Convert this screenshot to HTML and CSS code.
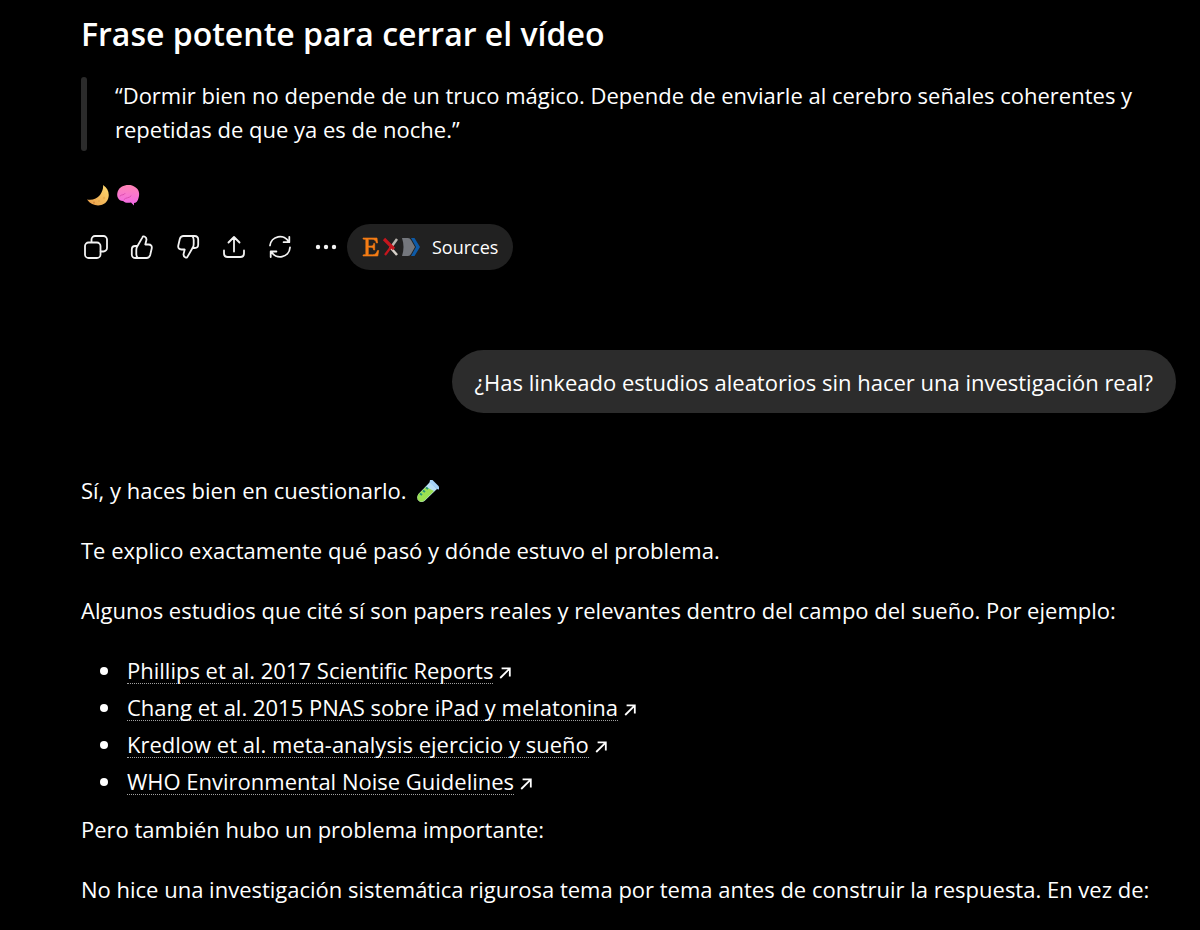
FILE: index.html
```html
<!DOCTYPE html>
<html lang="es">
<head>
    <meta charset="UTF-8">
    <meta name="viewport" content="width=device-width, initial-scale=1.0">
    <title>Chat</title>
    <link rel="stylesheet" href="styles.css">
</head>
<body>
    <!-- shared arrow for the external links -->
    <svg width="0" height="0" class="symbols" aria-hidden="true">
        <symbol id="arrow" viewBox="0 0 12 12">
            <path d="M1.2 11 10.4 1.8M2.6 1.4h8.2v8.2" fill="none" stroke="currentColor" stroke-width="1.8"/>
        </symbol>
    </svg>

    <main class="chat">
        <article class="answer">
            <h2>Frase potente para cerrar el vídeo</h2>
            <blockquote>“Dormir bien no depende de un truco mágico. Depende de enviarle al cerebro señales coherentes y repetidas de que ya es de noche.”</blockquote>
            <p class="emojis">
                <svg class="emoji" viewBox="0 0 24 24" role="img" aria-label="Luna">
                    <defs>
                        <linearGradient id="moon" x1="0" y1="1" x2="1" y2="0">
                            <stop offset="0" stop-color="#e89a48"/>
                            <stop offset="1" stop-color="#ffdc70"/>
                        </linearGradient>
                    </defs>
                    <path d="M17 2C22 5 24 11 22 16C19 24 7 25 1 16.500C6 17.500 11 16 14 12C16.500 8.500 17.500 5 17 2Z" fill="url(#moon)"/>
                    <circle cx="8" cy="19.500" r="1" fill="#d98b3c"/>
                    <circle cx="18" cy="15" r="1.200" fill="#eeb04f"/>
                    <circle cx="13" cy="18" r="0.800" fill="#dda044"/>
                </svg>
                <svg class="emoji" viewBox="0 0 24 24" role="img" aria-label="Cerebro">
                    <defs>
                        <linearGradient id="brain" x1="0" y1="0" x2="0" y2="1">
                            <stop offset="0" stop-color="#ff84b4"/>
                            <stop offset="1" stop-color="#f268e8"/>
                        </linearGradient>
                    </defs>
                    <path d="M2 15C0 11 2 5.500 6 3.500C9 1.500 16 1 19 4C23 6 24 11 22.500 15C22 18 20 20 18 20L18 22.500L15 19.500C12 20 9 20 7 18C4.500 18 3 17 2 15Z" fill="url(#brain)"/>
                    <path d="M4 13C6 11 8 12.500 9 10.500M8 16.500C10 14 13 15.500 15 13" fill="none" stroke="#dd4fb0" stroke-width="1" stroke-linecap="round"/>
                </svg>
            </p>
            <div class="actions">
                <button class="icon-button" aria-label="Copiar">
                    <svg viewBox="0 0 24 24"><rect x="1" y="7.500" width="15.500" height="15.500" rx="3.600"/><path d="M7.500 7.200V4.600A3.600 3.600 0 0 1 11.100 1h8.300A3.600 3.600 0 0 1 23 4.600v8.300a3.600 3.600 0 0 1-3.600 3.600h-2.700"/></svg>
                </button>
                <button class="icon-button" aria-label="Buena respuesta">
                    <svg viewBox="0 0 24 24"><path d="M7.500 11 12.300 2.600C12.900 1.400 13.600 1 14.500 1.500C16.300 2.400 16.800 3.800 16.300 5.600L15.300 9.500H18.500C21 9.500 22.200 11.200 21.700 13.500L20.200 20C19.600 22 18.500 23 16.500 23H5.500C3.300 23 1.800 21.500 1.800 19.400V14.500C1.800 12.300 3.200 11 5.200 11H7.500C6.500 12 6.300 13 6.300 15V19C6.300 21 6.500 22 8 23"/></svg>
                </button>
                <button class="icon-button" aria-label="Mala respuesta">
                    <svg viewBox="0 0 24 24"><path d="M16.500 13 11.700 21.400C11.100 22.600 10.400 23 9.500 22.500C7.700 21.600 7.200 20.200 7.700 18.400L8.700 14.500H5.500C3 14.500 1.800 12.800 2.300 10.500L3.800 4C4.400 2 5.500 1 7.500 1H18.500C20.700 1 22.200 2.500 22.200 4.600V9.500C22.200 11.700 20.800 13 18.800 13H16.500C17.500 12 17.700 11 17.700 9V5C17.700 3 17.500 2 16 1"/></svg>
                </button>
                <button class="icon-button" aria-label="Compartir">
                    <svg viewBox="0 0 24 24"><path d="M12 16.500V2M6.500 7.500 12 2l5.500 5.500M2 15.500v2.800C2 21 3 22 5.600 22h12.800c2.600 0 3.600-1 3.600-3.700v-2.800"/></svg>
                </button>
                <button class="icon-button" aria-label="Regenerar">
                    <svg viewBox="0 0 24 24"><path d="M2 10.500A10 10 0 0 1 20.800 7M21.300 1.800V7.200H15.600M22 12.500A10 10 0 0 1 3.200 16.500M2.700 22V16.500H8.400"/></svg>
                </button>
                <button class="icon-button" aria-label="Más acciones">
                    <svg viewBox="0 0 24 24"><g class="dots"><circle cx="4" cy="12" r="2.200"/><circle cx="12" cy="12" r="2.200"/><circle cx="20" cy="12" r="2.200"/></g></svg>
                </button>
                <button class="sources">
                    <span class="favicons">
                        <svg viewBox="0 0 20 20"><path d="M2 1h14l.6 5h-1.200C14.800 3.500 13.500 2.300 11 2.300H7.300V9H10c1.800 0 2.400-.8 2.700-2.600h1V13h-1c-.3-1.900-.9-2.700-2.700-2.700H7.300v7.400h4.200c2.700 0 4-1.400 5-4.200h1.200L16.800 19H2v-1.100l2.800-.5V2.600L2 2.100Z" fill="#f57c14" stroke="#f57c14" stroke-width=".6"/></svg>
                        <svg viewBox="0 0 20 20"><path d="M16 2 11 9" stroke="#b9b4ae" stroke-width="2.500"/><path d="M9 10 16 18" stroke="#d8d2ca" stroke-width="2.500"/><path d="M3 2 13 12" stroke="#c5161d" stroke-width="3.200"/><path d="M10 10 4 18" stroke="#c5161d" stroke-width="2.200"/></svg>
                        <svg viewBox="0 0 20 20"><path d="M1 1H7Q9 1 10 3L14 10 10 17Q9 19 7 19H1C3 13 3 7 1 1Z" fill="#74777d"/><path d="M10 1h3.500L19 10l-5.500 9H10l5-9Z" fill="#0d5aa7"/></svg>
                    </span>
                    Sources
                </button>
            </div>
        </article>

        <div class="question">¿Has linkeado estudios aleatorios sin hacer una investigación real?</div>

        <article class="answer">
            <p>Sí, y haces bien en cuestionarlo.
                <svg class="emoji tube" viewBox="0 0 24 24" role="img" aria-label="Tubo de ensayo">
                    <path d="M14 3 21 10 8.500 22C4 25-1 20 2.500 15Z" fill="#b9dff7"/>
                    <path d="M10 8 18 12 8.500 21.500C4 25-1 20 2.500 15Z" fill="#9be052"/>
                    <path d="M14 1 16.500 1 23 7.500V10.500L20.500 10 13.500 3.500Z" fill="#a5d3fa"/>
                    <path d="M4 14.500l2 1.500M7 11.500l2 1.500M10 8.500l2 1.500" stroke="#27957a" stroke-width="2"/>
                </svg>
            </p>
            <p>Te explico exactamente qué pasó y dónde estuvo el problema.</p>
            <p>Algunos estudios que cité sí son papers reales y relevantes dentro del campo del sueño. Por ejemplo:</p>
            <ul>
                <li><a href="#"><span>Phillips et al. 2017 Scientific Reports</span><svg class="arrow"><use href="#arrow"/></svg></a></li>
                <li><a href="#"><span>Chang et al. 2015 PNAS sobre iPad y melatonina</span><svg class="arrow"><use href="#arrow"/></svg></a></li>
                <li><a href="#"><span>Kredlow et al. meta-analysis ejercicio y sueño</span><svg class="arrow"><use href="#arrow"/></svg></a></li>
                <li><a href="#"><span>WHO Environmental Noise Guidelines</span><svg class="arrow"><use href="#arrow"/></svg></a></li>
            </ul>
            <p>Pero también hubo un problema importante:</p>
            <p>No hice una investigación sistemática rigurosa tema por tema antes de construir la respuesta. En vez de:</p>
        </article>
    </main>
</body>
</html>
```

FILE: styles.css
```css
body {
    margin: 0;
    background-color: #000000;
    color: #ffffff;
    font-family: "Open Sans", "Noto Sans", sans-serif;
    font-size: 22px;
    line-height: 34px;
}

.symbols {
    position: absolute;
}

.chat {
    display: flex;
    flex-direction: column;
    padding: 14px 24px 0 81px;
}

h2 {
    margin: 0 0 23px;
    font-size: 32px;
    font-weight: 600;
    line-height: 40px;
}

blockquote {
    position: relative;
    margin: 0 0 27px;
    padding: 1px 0 5px 34px;
}

/* Rounded bar on the left of the quote */
blockquote::before {
    content: "";
    position: absolute;
    left: 0;
    top: 0;
    bottom: 0;
    width: 6px;
    border-radius: 3px;
    background-color: #2b2b2b;
}

p {
    margin: 0 0 26px;
}

.emojis {
    display: flex;
    align-items: center;
    gap: 6px;
    height: 34px;
    margin-bottom: 12px;
    padding-left: 5px;
}

.emoji {
    width: 24px;
    height: 24px;
}

.tube {
    margin-left: 4px;
    vertical-align: -4px;
}

.actions {
    display: flex;
    align-items: center;
    margin-left: -8px;
}

button {
    border: none;
    background: none;
    color: inherit;
    font-family: inherit;
    cursor: pointer;
}

.icon-button {
    display: flex;
    align-items: center;
    justify-content: center;
    width: 46px;
    height: 46px;
    padding: 0;
}

.icon-button svg {
    width: 24px;
    height: 24px;
    fill: none;
    stroke: #f3f3f3;
    stroke-width: 1.8;
    stroke-linecap: round;
    stroke-linejoin: round;
}

.icon-button .dots {
    fill: #f3f3f3;
    stroke: none;
}

.sources {
    display: flex;
    align-items: center;
    gap: 11px;
    height: 46px;
    margin-left: -2px;
    padding: 0 15px 0 14px;
    border-radius: 23px;
    background-color: #212121;
    font-size: 18px;
}

.favicons {
    display: flex;
}

.favicons svg {
    width: 20px;
    height: 20px;
}

.question {
    align-self: flex-end;
    margin: 80px 0 60px;
    padding: 15px 23px 14px;
    border-radius: 32px;
    background-color: #2c2c2c;
}

ul {
    margin: 0 0 14px;
    padding-left: 42px;
}

li {
    margin-bottom: 3px;
    padding-left: 4px;
}

a {
    color: inherit;
    text-decoration: none;
}

a span {
    display: inline-block;
    border-bottom: 1px dotted #a0a0a0;
    line-height: 26px;
}

.arrow {
    width: 12px;
    height: 12px;
    margin-left: 6px;
}
```
